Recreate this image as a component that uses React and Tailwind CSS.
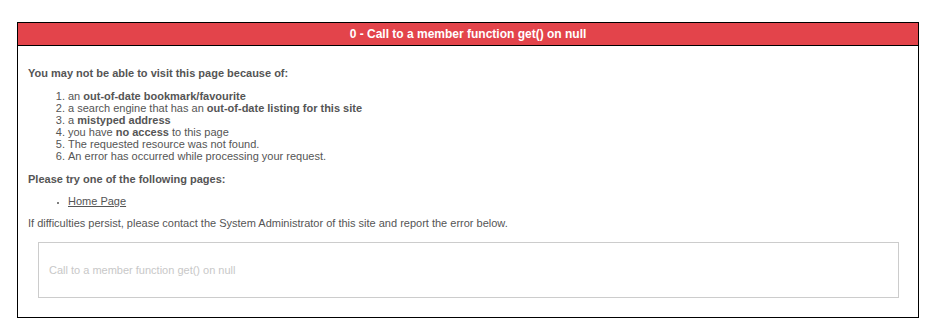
const reasons = [
  [<>an </>, <strong key="b">out-of-date bookmark/favourite</strong>],
  [<>a search engine that has an </>, <strong key="b">out-of-date listing for this site</strong>],
  [<>a </>, <strong key="b">mistyped address</strong>],
  [<>you have </>, <strong key="b">no access</strong>, <> to this page</>],
  [<>The requested resource was not found.</>],
  [<>An error has occurred while processing your request.</>],
];

const App = () => {
  return (
    <div className="min-h-screen bg-white pt-[22px] font-['Liberation_Sans',Arial,sans-serif] text-[11px] leading-[12px] text-[#555]">
      <div className="ml-[17px] w-[902px] border border-black">
        {/* Header */}
        <div className="h-[23px] border-b border-black bg-[#e3444b] text-center text-[12px] font-bold leading-[22px] text-white">
          0 - Call to a member function get() on null
        </div>

        {/* Body */}
        <div className="px-[10px] pt-[21px] pb-[19px]">
          <p className="font-bold">You may not be able to visit this page because of:</p>

          <ol className="mt-[11px] ml-[40px] list-decimal">
            {reasons.map((r, i) => (
              <li key={i}>{r}</li>
            ))}
          </ol>

          <p className="mt-[11px] font-bold">Please try one of the following pages:</p>

          <ul className="mt-[10px] ml-[40px] list-disc marker:text-[8px]">
            <li>
              <a href="#" className="text-[#555] underline">
                Home Page
              </a>
            </li>
          </ul>

          <p className="mt-[10px]">
            If difficulties persist, please contact the System Administrator of this site and report the error below.
          </p>

          {/* Technical info */}
          <div className="mt-[13px] ml-[10px] mr-[9px] h-[56px] border border-[#cccccc] pl-[10px] pt-[21px] text-[#c8c8c8]">
            Call to a member function get() on null
          </div>
        </div>
      </div>
    </div>
  );
};

export default App;
